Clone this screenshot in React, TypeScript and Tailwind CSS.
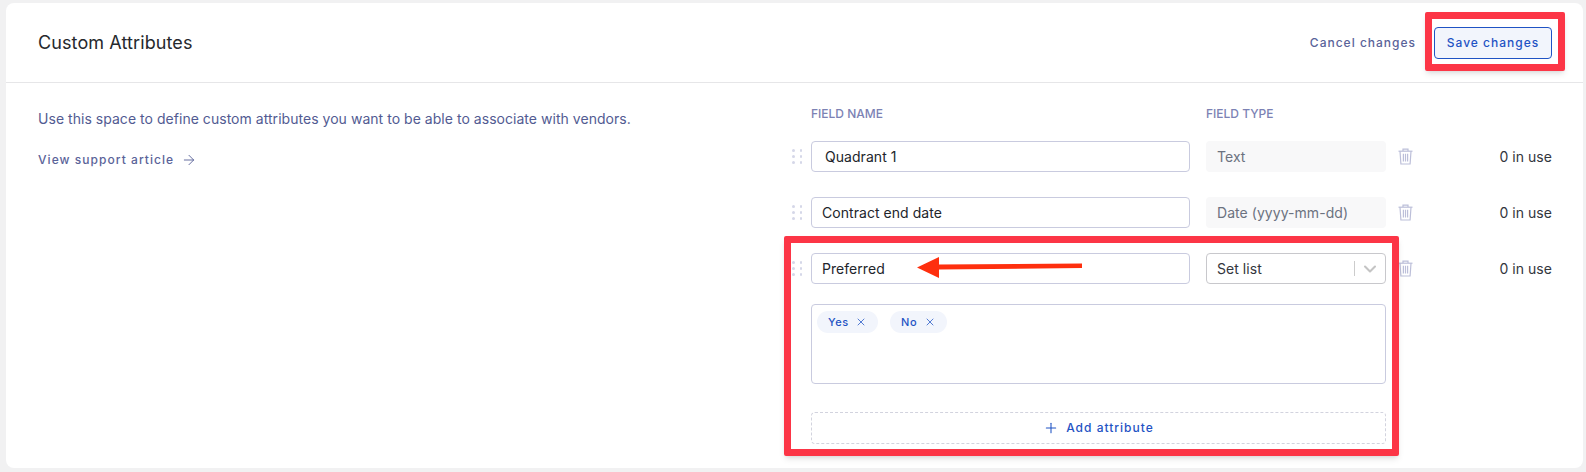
import { ArrowRight, ChevronDown, Plus, X } from 'lucide-react';

const fieldRows = [
  { name: 'Quadrant 1', type: 'Text', inset: 'pl-[13px]' },
  { name: 'Contract end date', type: 'Date (yyyy-mm-dd)', inset: 'pl-[10px]' },
];

function Grip() {
  return (
    <div className="grid w-[10px] grid-cols-2 gap-x-[5px] gap-y-[3.5px]">
      {[0, 1, 2, 3, 4, 5].map((i) => (
        <span key={i} className="h-[2.5px] w-[2.5px] rounded-full bg-[#d5d7e8]" />
      ))}
    </div>
  );
}

function NameInput({ value, inset }: { value: string; inset: string }) {
  return (
    <div
      className={`flex h-[31px] w-[379px] items-center rounded-[4px] border border-[#c9cbdf] bg-white text-[14px] tracking-[0.05px] text-[#22252b] ${inset}`}
    >
      {value}
    </div>
  );
}

function TrashIcon() {
  return (
    <svg className="ml-[12px] shrink-0" width="15" height="17" viewBox="0 0 15 17" fill="none" stroke="#bcbfd9" strokeWidth="1.2">
      <path d="M0.5 3.2 H14.5" />
      <path d="M5 3 V1.1 H10 V3" />
      <path d="M2 3.2 L2.9 16 H12.1 L13 3.2" />
      <path d="M5.4 5.8 V13.4 M7.5 5.8 V13.4 M9.6 5.8 V13.4" />
    </svg>
  );
}

function RowEnd() {
  return (
    <>
      <TrashIcon />
      <span className="ml-auto text-[14px] tracking-[0.05px] text-[#33363d]">0 in use</span>
    </>
  );
}

function Chip({ label, width }: { label: string; width: string }) {
  return (
    <span
      className={`flex h-[22px] items-center justify-between rounded-full bg-[#f2f5fc] pl-[11px] pr-[11px] text-[11px] font-medium tracking-[0.6px] text-[#1f53c4] ${width}`}
    >
      {label}
      <X className="h-[12px] w-[12px]" strokeWidth={1.5} />
    </span>
  );
}

export default function App() {
  return (
    <div
      className="relative h-[472px] w-[1586px] overflow-hidden bg-[#f1f1f2] pl-[6px] pr-[3px] pt-[3px]"
      style={{ fontFamily: 'Inter, "Liberation Sans", sans-serif' }}
    >
      <div className="h-[465px] rounded-[8px] bg-white">
        {/* Header */}
        <div className="flex h-[80px] items-center border-b border-[#e6e6e8] pl-[32px] pr-[31px]">
          <h1 className="text-[18px] font-normal tracking-[0.1px] text-[#26282d]">Custom Attributes</h1>
          <button className="ml-auto mt-[1px] text-[12px] font-medium tracking-[1px] text-[#5a6399]">
            Cancel changes
          </button>
          <button className="ml-[18px] mt-[1px] h-[32px] w-[118px] rounded-[4px] border border-[#1f53c4] bg-[#f2f5fc] text-[12px] font-medium tracking-[1px] text-[#1f53c4]">
            Save changes
          </button>
        </div>

        {/* Body */}
        <div className="flex pl-[32px] pr-[31px]">
          <div className="w-[752px] pt-[27px]">
            <p className="text-[14px] leading-[17px] tracking-[0.035px] text-[#525b92]">
              Use this space to define custom attributes you want to be able to associate with vendors.
            </p>
            <a className="mt-[24px] flex items-center text-[12px] font-medium tracking-[1.05px] text-[#5a6399]">
              View support article
              <ArrowRight className="ml-[7px] h-[16px] w-[16px]" strokeWidth={1.4} />
            </a>
          </div>

          <div className="flex-1">
            <div className="flex h-[58px] items-start pl-[21px] pt-[23px] text-[12px] font-medium leading-[15px] text-[#7c82b4]">
              <span className="w-[395px]">FIELD NAME</span>
              <span>FIELD TYPE</span>
            </div>

            <div className="flex flex-col gap-[25px]">
              {fieldRows.map((row) => (
                <div key={row.name} className="flex items-center">
                  <div className="w-[21px] pl-[2px]">
                    <Grip />
                  </div>
                  <NameInput value={row.name} inset={row.inset} />
                  <div className="ml-[16px] flex h-[31px] w-[180px] items-center rounded-[4px] bg-[#f8f8f9] pl-[11px] text-[14px] tracking-[0.05px] text-[#6b7280]">
                    {row.type}
                  </div>
                  <RowEnd />
                </div>
              ))}

              <div>
                <div className="flex items-center">
                  <div className="w-[21px] pl-[2px]">
                    <Grip />
                  </div>
                  <NameInput value="Preferred" inset="pl-[10px]" />
                  <div className="ml-[16px] flex h-[31px] w-[180px] items-center rounded-[4px] border border-[#c8c8cc] bg-white pl-[10px] text-[14px] tracking-[0.05px] text-[#33363d]">
                    Set list
                    <span className="ml-auto h-[15px] w-px bg-[#cccccc]" />
                    <ChevronDown className="mx-[5px] h-[20px] w-[20px] text-[#c4c4c4]" strokeWidth={2.5} />
                  </div>
                  <RowEnd />
                </div>

                <div className="ml-[21px] mt-[20px] flex h-[80px] w-[575px] items-start gap-[12px] rounded-[4px] border border-[#c9cbdf] pl-[5px] pt-[6px]">
                  <Chip label="Yes" width="w-[61px]" />
                  <Chip label="No" width="w-[57px]" />
                </div>

                <button className="ml-[21px] mt-[28px] flex h-[32px] w-[575px] items-center justify-center rounded-[4px] border border-dashed border-[#d2d3de] text-[12px] font-medium tracking-[1px] text-[#1f53c4]">
                  <Plus className="mr-[7px] h-[16px] w-[16px]" strokeWidth={1.6} />
                  Add attribute
                </button>
              </div>
            </div>
          </div>
        </div>
      </div>

      {/* Annotations drawn over the page */}
      <div className="absolute left-[1425px] top-[12px] h-[59px] w-[140px] rounded-[2px] border-[7px] border-[#fc3546] shadow-md" />
      <div className="absolute left-[784px] top-[236px] h-[220px] w-[615px] rounded-[2px] border-[7px] border-[#fc3546] shadow-md" />
      <svg className="absolute left-[910px] top-[250px]" width="180" height="36" viewBox="0 0 180 36">
        <path d="M7 17.5 L29 7 L29 14.5 L172 13.5 L172 18 L29 19.5 L29 28 Z" fill="#fe2f0e" />
      </svg>
    </div>
  );
}
